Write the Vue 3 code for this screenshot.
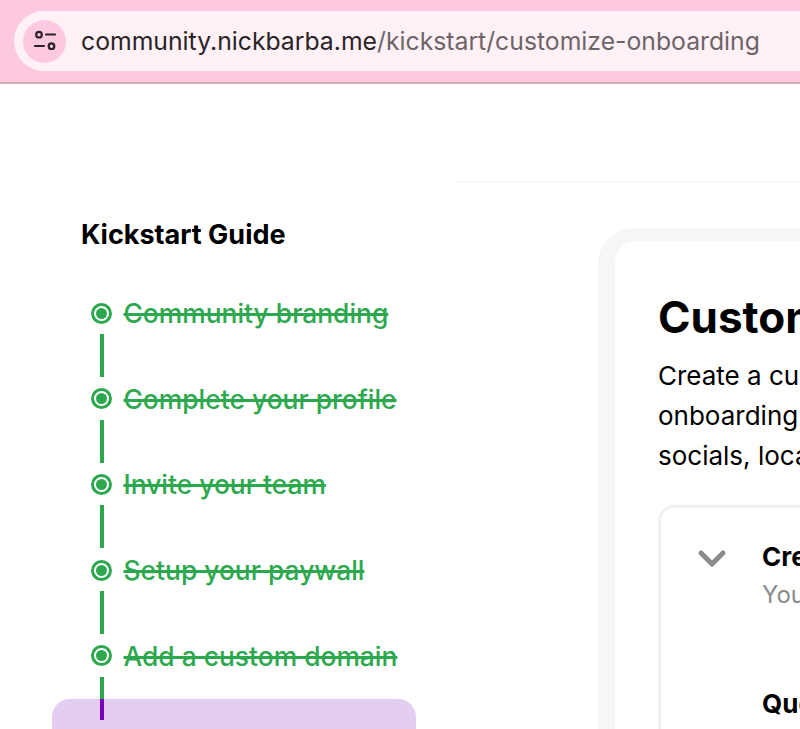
<script setup>
const done = [
  'Community branding',
  'Complete your profile',
  'Invite your team',
  'Setup your paywall',
  'Add a custom domain',
]
</script>

<template>
  <div class="page">
    <header class="browser">
      <div class="pill">
        <span class="site-icon">
          <svg width="24" height="24" viewBox="0 0 24 24" fill="none" stroke="#2a2327" stroke-width="2.2" stroke-linecap="round">
            <circle cx="6" cy="5.7" r="2.8" />
            <path d="M13 5.5h9" />
            <path d="M2 17h9" />
            <circle cx="18.5" cy="17.2" r="2.8" />
          </svg>
        </span>
        <span class="url"><span class="host">community.nickbarba.me</span>/kickstart/customize-onboarding</span>
      </div>
    </header>

    <div class="rule-row"><span class="rule"></span></div>

    <main class="layout">
      <aside class="guide">
        <h2 class="guide-title">Kickstart Guide</h2>
        <ul class="steps">
          <li v-for="(s, i) in done" :key="s" class="step">
            <div class="step-row">
              <span class="dot"><span class="dot-core"></span></span>
              <span class="step-label">{{ s }}</span>
            </div>
            <span class="line" :class="{ 'line-short': i === done.length - 1 }"></span>
          </li>
          <li class="step-active">
            <span class="line line-active"></span>
          </li>
        </ul>
      </aside>

      <section class="card">
        <h1 class="title">Customize onboarding</h1>
        <p class="lead">Create a custom<br />onboarding flow for<br />socials, location and more</p>
        <div class="box">
          <svg class="chevron" width="30" height="20" viewBox="0 0 30 20" fill="none" stroke="#8b8b8b" stroke-width="5" stroke-linecap="round" stroke-linejoin="round">
            <path d="M4 4l11 11L26 4" />
          </svg>
          <div class="box-body">
            <div class="box-head">Create your form</div>
            <div class="box-sub">You can add questions</div>
            <div class="box-q">Questions</div>
          </div>
        </div>
      </section>
    </main>
  </div>
</template>

<style>
html, body { margin: 0; height: 100%; overflow: hidden; background: #fff; }
</style>

<style scoped>
.page {
  width: 800px;
  height: 729px;
  overflow: hidden;
  background: #fff;
  font-family: Inter, "Liberation Sans", sans-serif;
  color: #000;
}
.browser {
  box-sizing: border-box;
  height: 84px;
  padding: 11px 0 11px 14px;
  background: #fdc9e0;
  border-bottom: 2px solid #cfaab9;
}
.pill {
  height: 60px;
  margin-right: -40px;
  display: flex;
  align-items: center;
  gap: 15px;
  padding-left: 9px;
  background: #fff1f6;
  border-radius: 30px;
}
.site-icon {
  width: 43px;
  height: 43px;
  flex: none;
  display: flex;
  align-items: center;
  justify-content: center;
  border-radius: 50%;
  background: #fdc9e0;
}
.url {
  font-size: 24.75px;
  color: #6d6468;
  white-space: nowrap;
}
.host { color: #2a2327; }
.rule-row {
  height: 99px;
  display: flex;
  justify-content: flex-end;
  align-items: flex-end;
}
.rule {
  width: 345px;
  height: 2px;
  background: #f7f7f7;
}
.layout {
  display: flex;
  align-items: flex-start;
  padding-left: 81px;
}
.guide {
  width: 517px;
  flex: none;
  padding-top: 34px;
}
.guide-title {
  margin: 0;
  font-size: 27px;
  line-height: 36px;
  font-weight: 700;
}
.steps {
  list-style: none;
  margin: 44px 0 0;
  padding: 0;
}
.step {
  height: 85.7px;
}
.step-row {
  display: flex;
  align-items: center;
  height: 32px;
}
.dot {
  width: 21px;
  height: 21px;
  box-sizing: border-box;
  margin-left: 10px;
  flex: none;
  display: flex;
  align-items: center;
  justify-content: center;
  border: 3.5px solid #2ea84f;
  border-radius: 50%;
}
.dot-core {
  width: 11px;
  height: 11px;
  border-radius: 50%;
  background: #2ea84f;
}
.step-label {
  margin-left: 11.5px;
  font-size: 26.4px;
  font-weight: 500;
  color: #2ea84f;
  white-space: nowrap;
  text-decoration: line-through;
  text-decoration-thickness: 3px;
}
.line {
  display: block;
  width: 4px;
  height: 43px;
  margin: 5px 0 0 19px;
  background: #2ea84f;
}
.line-short { height: 22px; }
.step-active {
  height: 120px;
  width: 364px;
  margin: -26.5px 0 0 -29px;
  background: #e3cef2;
  border-radius: 18px;
  position: relative;
}
.line-active {
  height: 21px;
  margin: 0 0 0 48px;
  background: #7a00b8;
}
.card {
  flex: none;
  width: 400px;
  height: 600px;
  box-sizing: border-box;
  margin-top: 45px;
  padding: 44px 0 0 44px;
  border-style: solid;
  border-color: #f6f6f6;
  border-width: 13px 0 0 17px;
  border-radius: 36px 0 0 0;
}
.title {
  margin: 0 0 0 -1px;
  font-size: 44px;
  line-height: 64px;
  font-weight: 700;
  white-space: nowrap;
}
.lead {
  margin: 7px 0 0 -1px;
  font-size: 26px;
  line-height: 40px;
  white-space: nowrap;
}
.box {
  display: flex;
  align-items: flex-start;
  gap: 35px;
  margin: 29px 0 0 -1px;
  width: 500px;
  height: 300px;
  box-sizing: border-box;
  padding: 29px 0 0 36px;
  border: 3px solid #f0f0f0;
  border-radius: 16px;
}
.chevron {
  flex: none;
  margin-top: 12px;
}
.box-body { white-space: nowrap; }
.box-head {
  font-size: 26px;
  line-height: 40px;
  font-weight: 700;
}
.box-sub {
  font-size: 24px;
  line-height: 36px;
  color: #8b8b8b;
}
.box-q {
  margin-top: 71px;
  font-size: 26px;
  line-height: 40px;
  font-weight: 700;
}
</style>
